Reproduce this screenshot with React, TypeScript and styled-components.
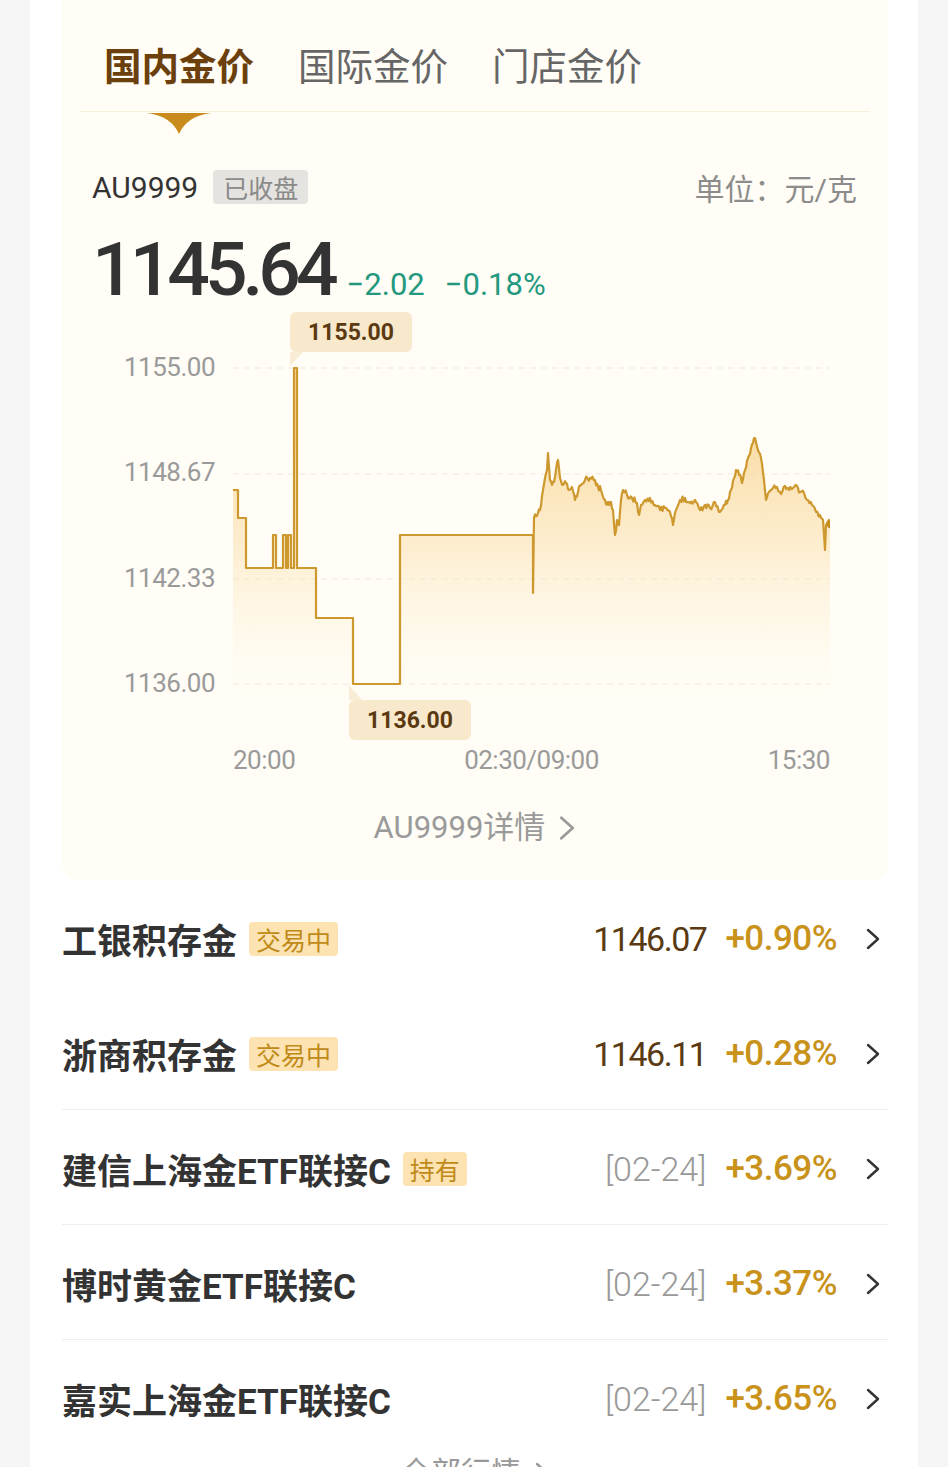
import * as React from 'react'
import styled, { createGlobalStyle } from 'styled-components'

const GlobalStyle = createGlobalStyle`
  body {
    margin: 0;
    background: #f5f5f5;
    font-family: Roboto, 'Noto Sans CJK SC', sans-serif;
  }
`

const Page = styled.div`
  width: 888px;
  min-height: 1467px;
  margin: 0 30px;
  padding: 0 30px 0 32px;
  box-sizing: border-box;
  background: #fff;
  overflow: hidden;
`

const Panel = styled.section`
  background: #fffdf5;
  border-radius: 0 0 16px 16px;
  padding: 0 31px 32px 30px;
`

const TabBar = styled.div`
  display: flex;
  align-items: center;
  gap: 44px;
  height: 112px;
  box-sizing: border-box;
  margin: 0 -13px 0 -12px;
  padding: 22px 0 0 24px;
  border-bottom: 1.5px solid #f7f0dd;
`

const Tab = styled.div<{ $active?: boolean }>`
  position: relative;
  font-size: 37.5px;
  line-height: 44px;
  font-weight: ${p => (p.$active ? 700 : 400)};
  color: ${p => (p.$active ? '#6b400c' : '#666')};
`

const Indicator = styled.svg`
  position: absolute;
  top: 68px;
  left: 50%;
  transform: translateX(-50%);
`

const InfoRow = styled.div`
  display: flex;
  align-items: center;
  height: 34px;
  margin-top: 58px;
`

const Code = styled.span`
  font-size: 30px;
  color: #333;
`

const Badge = styled.span<{ $tone: 'gray' | 'gold' }>`
  display: inline-flex;
  align-items: center;
  height: 34px;
  margin-left: ${p => (p.$tone === 'gray' ? 15 : 13)}px;
  padding: 0 ${p => (p.$tone === 'gray' ? 10 : 7)}px;
  border-radius: 4px;
  font-size: 25px;
  font-weight: 400;
  background: ${p => (p.$tone === 'gray' ? '#e4e3df' : '#fce3b1')};
  color: ${p => (p.$tone === 'gray' ? '#8a8a8a' : '#c08a18')};
`

const Unit = styled.span`
  margin-left: auto;
  font-size: 30px;
  color: #8c8c8c;
`

const PriceRow = styled.div`
  display: flex;
  align-items: baseline;
  gap: 13px;
  margin-top: 28px;
  height: 76px;
`

const BigPrice = styled.span`
  font-size: 75px;
  line-height: 1;
  font-weight: 500;
  letter-spacing: -5px;
  color: #333;
`

const Delta = styled.span`
  font-size: 31px;
  color: #23997f;
  & + & {
    margin-left: 7px;
  }
`

const ChartGrid = styled.div`
  display: grid;
  grid-template-columns: 123px 597px;
  column-gap: 18px;
  margin-top: 32px;
`

const YAxis = styled.div`
  display: flex;
  flex-direction: column;
  justify-content: space-between;
  height: 380px;
  box-sizing: border-box;
  padding: 12px 0 22px;
  text-align: right;
`

const AxisLabel = styled.span`
  font-size: 26px;
  line-height: 30px;
  letter-spacing: -0.5px;
  color: #9a9a9a;
`

const Plot = styled.div`
  position: relative;
  height: 380px;
  svg {
    display: block;
  }
`

const Tooltip = styled.div<{ $pointer: 'up' | 'down' }>`
  position: absolute;
  width: 122px;
  height: 40px;
  display: flex;
  align-items: center;
  justify-content: center;
  border-radius: 6px;
  background: #f8e8cc;
  color: #5b3a12;
  font-size: 23px;
  font-weight: 700;
  &::after {
    content: '';
    position: absolute;
    left: 0;
    ${p => (p.$pointer === 'down' ? 'top: 100%;' : 'bottom: 100%;')}
    border-right: 13px solid transparent;
    ${p =>
      p.$pointer === 'down'
        ? 'border-top: 14px solid #f8ecd6;'
        : 'border-bottom: 15px solid #f8ecd6;'}
  }
`

const XAxis = styled.div`
  grid-column: 2;
  display: flex;
  justify-content: space-between;
  margin-top: 25px;
`

const DetailLink = styled.div`
  display: flex;
  align-items: center;
  justify-content: center;
  gap: 14px;
  margin-top: 33px;
  font-size: 31px;
  line-height: 40px;
  color: #9a9a9a;
`

const Row = styled.div<{ $divider?: boolean }>`
  display: flex;
  align-items: center;
  height: 115px;
  box-sizing: border-box;
  padding-top: 3px;
  border-bottom: 1px solid ${p => (p.$divider ? '#eeeeee' : 'transparent')};
`

const Name = styled.span`
  font-size: 35px;
  font-weight: 700;
  color: #333;
  & + span {
    margin-left: 12px;
  }
`

const Quote = styled.div`
  display: flex;
  align-items: center;
  margin-left: auto;
  margin-right: 8px;
`

const Value = styled.span<{ $muted?: boolean }>`
  font-size: ${p => (p.$muted ? 34 : 34)}px;
  font-weight: ${p => (p.$muted ? 300 : 400)};
  letter-spacing: ${p => (p.$muted ? 0 : -1.5)}px;
  color: ${p => (p.$muted ? '#999' : '#5a3a12')};
`

const Change = styled.span`
  margin: 0 29px 0 19px;
  font-size: 35px;
  font-weight: 500;
  letter-spacing: -0.5px;
  color: #c8921b;
`

const Footer = styled.div`
  display: flex;
  align-items: center;
  justify-content: center;
  gap: 14px;
  font-size: 30px;
  line-height: 36px;
  color: #999;
`

function Chevron({ color = '#333', w = 14, h = 22 }: { color?: string; w?: number; h?: number }) {
  return (
    <svg width={w} height={h} viewBox="0 0 14 22" fill="none">
      <polyline points="2,2 12,11 2,20" stroke={color} strokeWidth="2.4" strokeLinecap="round" strokeLinejoin="round" />
    </svg>
  )
}

// chart coords are the page pixels of the reference; the group shifts them into the plot box
const NIGHT =
  'M233 490 H238 V518 H246 V568 H273 V535 H276 V568 H283 V535 H286 V568 H288 V535 H291 V568 H294 V368 H297 V568 H316 V618 H353 V684 H400 V535 H533 V593 L534 518'

const DAY_KEYS: [number, number][] = [
  [534, 518], [537, 516], [540, 510], [543, 490], [545, 478], [547, 470], [548, 453], [550, 480],
  [552, 485], [554, 482], [556, 470], [558, 460], [560, 478], [563, 485], [566, 483], [569, 490],
  [572, 487], [575, 500], [578, 492], [581, 485], [585, 480], [590, 478], [595, 480], [598, 487],
  [601, 490], [605, 500], [608, 505], [611, 502], [613, 510], [615, 535], [617, 520], [619, 525],
  [621, 500], [623, 490], [627, 495], [632, 498], [637, 503], [639, 515], [641, 505], [645, 500],
  [650, 498], [655, 505], [660, 510], [665, 508], [670, 512], [673, 525], [676, 510], [680, 500],
  [685, 498], [690, 503], [695, 500], [700, 510], [705, 505], [710, 508], [715, 502], [720, 512],
  [725, 505], [728, 500], [731, 490], [734, 478], [736, 470], [739, 475], [742, 483], [745, 470],
  [748, 458], [751, 448], [754, 438], [756, 442], [758, 450], [761, 458], [764, 480], [766, 500],
  [769, 492], [773, 488], [777, 487], [781, 494], [785, 486], [789, 490], [793, 488], [797, 486],
  [800, 492], [804, 493], [808, 500], [812, 505], [816, 512], [820, 515], [823, 520], [825, 550],
  [826, 525], [829, 520], [831, 524],
]

function dayPath(): string {
  let seed = 11
  const rand = () => {
    seed = (seed * 16807) % 2147483647
    return seed / 2147483647
  }
  let d = ''
  for (let i = 0; i < DAY_KEYS.length - 1; i++) {
    const [x0, y0] = DAY_KEYS[i]
    const [x1, y1] = DAY_KEYS[i + 1]
    const steps = Math.max(1, Math.round((x1 - x0) / 1.2))
    for (let s = 0; s < steps; s++) {
      const t = s / steps
      const noise = s === 0 ? 0 : (rand() - 0.5) * 6
      d += ` L${(x0 + (x1 - x0) * t).toFixed(1)} ${(y0 + (y1 - y0) * t + noise).toFixed(1)}`
    }
  }
  return d + ' L831 524'
}

const GRID_Y = [368, 474, 579, 684]

function PriceChart() {
  const line = React.useMemo(() => NIGHT + dayPath(), [])
  return (
    <Plot>
      <svg width="597" height="380" viewBox="0 0 597 380">
        <defs>
          <linearGradient id="goldFill" gradientUnits="userSpaceOnUse" x1="0" y1="440" x2="0" y2="720">
            <stop offset="0" stopColor="#f7cf85" stopOpacity="0.7" />
            <stop offset="0.4" stopColor="#fadca6" stopOpacity="0.45" />
            <stop offset="1" stopColor="#fffdf5" stopOpacity="0" />
          </linearGradient>
        </defs>
        <g transform="translate(-233 -340)">
          {GRID_Y.map(y => (
            <line key={y} x1="233" x2="830" y1={y} y2={y} stroke="#efe9dc" strokeWidth="1.2" strokeDasharray="6 5" />
          ))}
          <path d={`${line} L831 720 L233 720 Z`} fill="url(#goldFill)" />
          <path d={line} fill="none" stroke="#cd982e" strokeWidth="2.2" strokeLinejoin="round" />
          <circle cx="831" cy="524" r="4.5" fill="#c98b1b" />
        </g>
      </svg>
      <Tooltip $pointer="down" style={{ left: 57, top: -28 }}>1155.00</Tooltip>
      <Tooltip $pointer="up" style={{ left: 116, top: 360 }}>1136.00</Tooltip>
    </Plot>
  )
}

interface Product {
  name: string
  tag?: string
  value: string
  muted?: boolean
  change: string
  divider?: boolean
}

const PRODUCTS: Product[] = [
  { name: '工银积存金', tag: '交易中', value: '1146.07', change: '+0.90%' },
  { name: '浙商积存金', tag: '交易中', value: '1146.11', change: '+0.28%', divider: true },
  { name: '建信上海金ETF联接C', tag: '持有', value: '[02-24]', muted: true, change: '+3.69%', divider: true },
  { name: '博时黄金ETF联接C', value: '[02-24]', muted: true, change: '+3.37%', divider: true },
  { name: '嘉实上海金ETF联接C', value: '[02-24]', muted: true, change: '+3.65%' },
]

export default function App() {
  return (
    <Page>
      <GlobalStyle />
      <Panel>
        <TabBar>
          <Tab $active>
            国内金价
            <Indicator width="64" height="21" viewBox="0 0 64 21">
              <path d="M0 0 H64 Q40 3 32 21 Q24 3 0 0 Z" fill="#c98b1b" />
            </Indicator>
          </Tab>
          <Tab>国际金价</Tab>
          <Tab>门店金价</Tab>
        </TabBar>
        <InfoRow>
          <Code>AU9999</Code>
          <Badge $tone="gray">已收盘</Badge>
          <Unit>单位：元/克</Unit>
        </InfoRow>
        <PriceRow>
          <BigPrice>1145.64</BigPrice>
          <Delta>−2.02</Delta>
          <Delta>−0.18%</Delta>
        </PriceRow>
        <ChartGrid>
          <YAxis>
            <AxisLabel>1155.00</AxisLabel>
            <AxisLabel>1148.67</AxisLabel>
            <AxisLabel>1142.33</AxisLabel>
            <AxisLabel>1136.00</AxisLabel>
          </YAxis>
          <PriceChart />
          <XAxis>
            <AxisLabel>20:00</AxisLabel>
            <AxisLabel>02:30/09:00</AxisLabel>
            <AxisLabel>15:30</AxisLabel>
          </XAxis>
        </ChartGrid>
        <DetailLink>
          AU9999详情
          <Chevron color="#9a9a9a" w={16} h={26} />
        </DetailLink>
      </Panel>
      {PRODUCTS.map(p => (
        <Row key={p.name} $divider={p.divider}>
          <Name>{p.name}</Name>
          {p.tag && <Badge $tone="gold">{p.tag}</Badge>}
          <Quote>
            <Value $muted={p.muted}>{p.value}</Value>
            <Change>{p.change}</Change>
            <Chevron />
          </Quote>
        </Row>
      ))}
      <Footer>
        全部行情
        <Chevron color="#999" w={14} h={22} />
      </Footer>
    </Page>
  )
}
